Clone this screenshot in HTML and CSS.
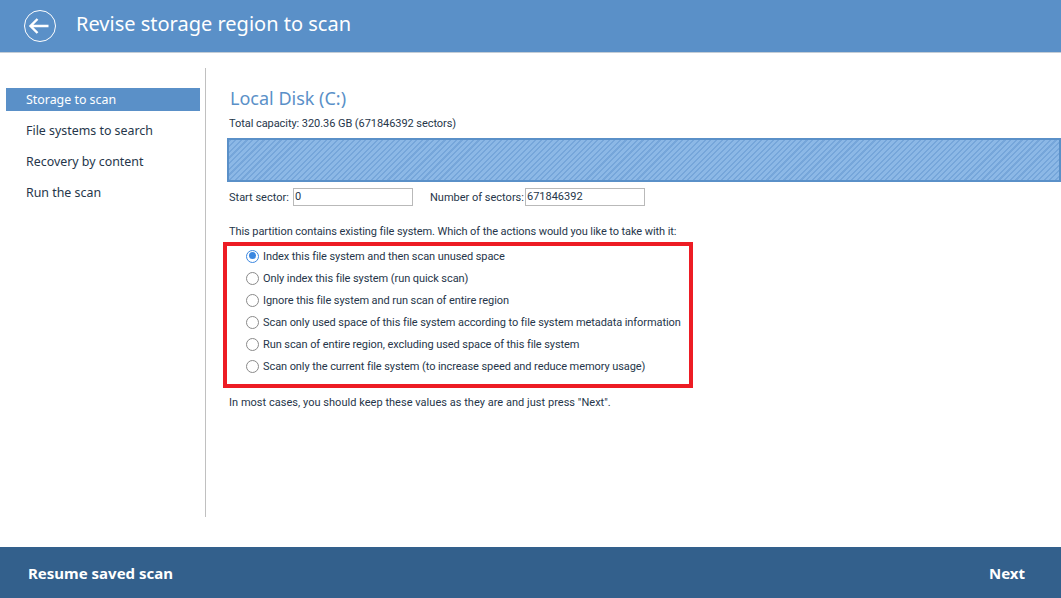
FILE: index.html
```html
<!DOCTYPE html>
<html lang="en">
<head>
<meta charset="utf-8">
<title>Revise storage region to scan</title>
<link rel="stylesheet" href="styles.css">
</head>
<body>
<div class="app">
  <header class="top">
    <svg class="back" width="34" height="34" viewBox="0 0 34 34" aria-hidden="true">
      <circle cx="16" cy="16" r="15.5" fill="none" stroke="#fff" stroke-width="1"/>
      <path d="M6.5 16H24.5M13.5 9L6.5 16L13.5 23" fill="none" stroke="#fff" stroke-width="2.4"/>
    </svg>
    <h1 class="top-title">Revise storage region to scan</h1>
  </header>
  <main class="body">
    <nav class="side">
      <div class="side-item active">Storage to scan</div>
      <div class="side-item">File systems to search</div>
      <div class="side-item">Recovery by content</div>
      <div class="side-item">Run the scan</div>
    </nav>
    <section class="content">
      <h2 class="disk">Local Disk (C:)</h2>
      <p class="cap">Total capacity: 320.36 GB (671846392 sectors)</p>
      <div class="bar"></div>
      <div class="fields">
        <label class="field first">Start sector:<span class="input w1">0</span></label>
        <label class="field">Number of sectors:<span class="input w2">671846392</span></label>
      </div>
      <p class="ask">This partition contains existing file system. Which of the actions would you like to take with it:</p>
      <div class="options">
        <div class="opt"><span class="radio on"></span>Index this file system and then scan unused space</div>
        <div class="opt"><span class="radio"></span>Only index this file system (run quick scan)</div>
        <div class="opt"><span class="radio"></span>Ignore this file system and run scan of entire region</div>
        <div class="opt"><span class="radio"></span>Scan only used space of this file system according to file system metadata information</div>
        <div class="opt"><span class="radio"></span>Run scan of entire region, excluding used space of this file system</div>
        <div class="opt"><span class="radio"></span>Scan only the current file system (to increase speed and reduce memory usage)</div>
      </div>
      <p class="hint">In most cases, you should keep these values as they are and just press "Next".</p>
    </section>
  </main>
  <footer class="bottom">
    <span class="foot-btn">Resume saved scan</span>
    <span class="foot-btn">Next</span>
  </footer>
</div>
</body>
</html>
```
FILE: styles.css
```css
* { box-sizing: border-box; }
html, body { margin: 0; padding: 0; height: 100%; overflow: hidden; background: #fff; }
body { font-family: Roboto, "Noto Sans", sans-serif; font-size: 11px; color: #26364a; }
.app { width: 1061px; height: 598px; display: flex; flex-direction: column; }
.top { height: 53px; flex: none; background: #5a90c8; border-bottom: 1px solid #c4cdd6; display: flex; align-items: center; padding-left: 24px; }
.back { flex: none; margin-right: 18px; margin-top: 1px; }
.top-title { margin: 0; font-family: "Noto Sans", sans-serif; font-size: 20px; font-weight: 400; color: #fff; line-height: 28px; position: relative; top: -2px; }
.body { flex: 1; display: flex; min-height: 0; padding-top: 15px; }
.side { width: 206px; height: 449px; flex: none; border-right: 1px solid #c0c0c0; padding: 20px 5px 0 6px; font-family: "Noto Sans", sans-serif; font-size: 12.4px; }
.side-item { height: 23px; line-height: 23px; margin-bottom: 8px; padding-left: 20px; color: #26364a; }
.side-item.active { background: #5a90c8; color: #fff; }
.content { flex: 1; min-width: 0; padding: 18px 0 0 21px; }
.disk { margin: 0 0 0 3px; font-family: "Noto Sans", sans-serif; font-size: 18px; font-weight: 400; line-height: 26px; color: #5a90c8; position: relative; top: -1px; }
.cap { margin: 4px 0 0 2px; line-height: 16px; letter-spacing: -0.06px; }
.bar { height: 44px; margin: 6px 0 0 0; border: 2px solid #5a90c8; background-color: #8ab4e0; background-image: repeating-linear-gradient(135deg, #76a6da 0 1.5px, #8cb8e6 1.5px 4px); }
.fields { display: flex; margin: 6px 0 0 2px; height: 18px; align-items: center; }
.field { display: flex; align-items: center; }
.field.first { width: 201px; }
.input { display: block; height: 18px; border: 1px solid #b9b9b9; line-height: 16px; padding-left: 1px; background: #fff; color: #26364a; }
.w1 { width: 120px; margin-left: 4px; }
.w2 { width: 120px; margin-left: 1px; }
.ask { margin: 18px 0 0 2px; line-height: 16px; letter-spacing: -0.08px; }
.options { width: 470px; height: 146px; margin: 2px 0 0 -4px; border: 4px solid #ed1c24; padding: 0 0 0 19px; letter-spacing: -0.08px; }
.opt { height: 20px; margin-bottom: 2px; display: flex; align-items: center; gap: 4px; white-space: nowrap; }
.radio { flex: none; width: 13px; height: 13px; border: 1.5px solid #8a8a8a; border-radius: 50%; background: #fff; position: relative; }
.radio.on { border-color: #3b87e0; }
.radio.on::after { content: ""; position: absolute; left: 1.5px; top: 1.5px; width: 7px; height: 7px; border-radius: 50%; background: #3b87e0; }
.hint { margin: 7px 0 0 2px; line-height: 16px; letter-spacing: 0.03px; }
.bottom { height: 51px; flex: none; background: #33608c; display: flex; justify-content: space-between; align-items: center; padding: 0 36px 0 28px; }
.foot-btn { color: #fff; font-family: "Noto Sans", sans-serif; font-size: 15px; font-weight: 700; }
```
